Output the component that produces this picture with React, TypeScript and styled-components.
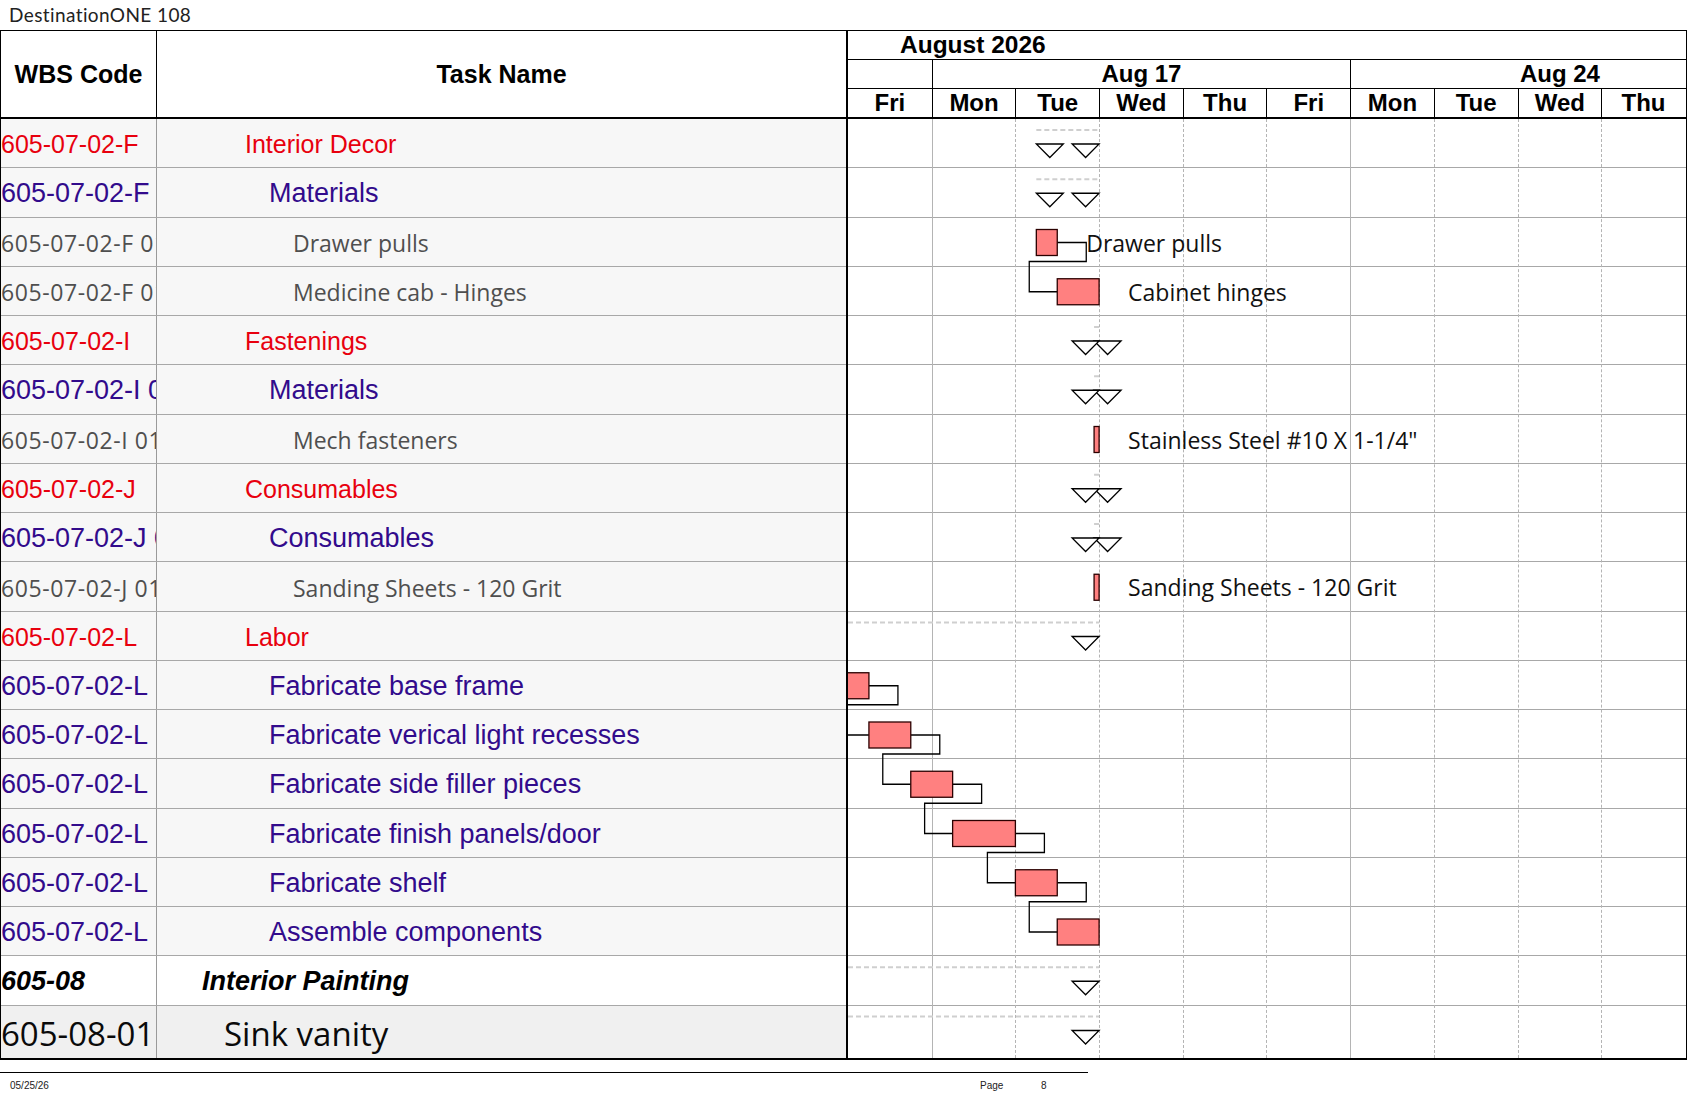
import React from "react";
import styled, { createGlobalStyle, css } from "styled-components";

const DAY = 83.7;
const ROW = 49.25;
const LAST_ROW = 52;
const CHART_W = 837;

type Level = "section" | "group" | "item" | "phase" | "task";

interface TaskRow {
  wbs: string;
  name: string;
  level: Level;
}

const rows: TaskRow[] = [
  { wbs: "605-07-02-F", name: "Interior Decor", level: "section" },
  { wbs: "605-07-02-F 01", name: "Materials", level: "group" },
  { wbs: "605-07-02-F 01 01", name: "Drawer pulls", level: "item" },
  { wbs: "605-07-02-F 01 02", name: "Medicine cab - Hinges", level: "item" },
  { wbs: "605-07-02-I", name: "Fastenings", level: "section" },
  { wbs: "605-07-02-I 01", name: "Materials", level: "group" },
  { wbs: "605-07-02-I 01 01", name: "Mech fasteners", level: "item" },
  { wbs: "605-07-02-J", name: "Consumables", level: "section" },
  { wbs: "605-07-02-J 01", name: "Consumables", level: "group" },
  { wbs: "605-07-02-J 01 01", name: "Sanding Sheets - 120 Grit", level: "item" },
  { wbs: "605-07-02-L", name: "Labor", level: "section" },
  { wbs: "605-07-02-L", name: "Fabricate base frame", level: "group" },
  { wbs: "605-07-02-L", name: "Fabricate verical light recesses", level: "group" },
  { wbs: "605-07-02-L", name: "Fabricate side filler pieces", level: "group" },
  { wbs: "605-07-02-L", name: "Fabricate finish panels/door", level: "group" },
  { wbs: "605-07-02-L", name: "Fabricate shelf", level: "group" },
  { wbs: "605-07-02-L", name: "Assemble components", level: "group" },
  { wbs: "605-08", name: "Interior Painting", level: "phase" },
  { wbs: "605-08-01", name: "Sink vanity", level: "task" },
];

// start / end in days from the first visible column (Fri)
const summaries = [
  { row: 0, start: 2.25, end: 3 },
  { row: 1, start: 2.25, end: 3 },
  { row: 4, start: 2.94, end: 3 },
  { row: 5, start: 2.94, end: 3 },
  { row: 7, start: 2.94, end: 3 },
  { row: 8, start: 2.94, end: 3 },
  { row: 10, start: -3, end: 3 },
  { row: 17, start: -3, end: 3 },
  { row: 18, start: -3, end: 3 },
];

const bars = [
  { row: 2, start: 2.25, end: 2.5, label: "Drawer pulls" },
  { row: 3, start: 2.5, end: 3, label: "Cabinet hinges" },
  { row: 6, start: 2.94, end: 3, label: 'Stainless Steel #10 X 1-1/4"' },
  { row: 9, start: 2.94, end: 3, label: "Sanding Sheets - 120 Grit" },
  { row: 11, start: -0.25, end: 0.25 },
  { row: 12, start: 0.25, end: 0.75 },
  { row: 13, start: 0.75, end: 1.25 },
  { row: 14, start: 1.25, end: 2 },
  { row: 15, start: 2, end: 2.5 },
  { row: 16, start: 2.5, end: 3 },
];

const links: [number, number][] = [
  [2, 3],
  [11, 12],
  [12, 13],
  [13, 14],
  [14, 15],
  [15, 16],
];

const days = ["Fri", "Mon", "Tue", "Wed", "Thu", "Fri", "Mon", "Tue", "Wed", "Thu"];

const weeks = [
  { label: "", days: 1 },
  { label: "Aug 17", days: 5 },
  { label: "Aug 24", days: 5 },
];

const GlobalStyle = createGlobalStyle`
  html, body {
    margin: 0;
    padding: 0;
    background: #fff;
  }
  body {
    font-family: "Liberation Sans", Arial, sans-serif;
  }
`;

const Page = styled.div`
  width: 1687px;
  height: 1097px;
  overflow: hidden;
  background: #fff;
`;

const Title = styled.div`
  height: 30px;
  padding-left: 9px;
  font-family: "Lato", "DejaVu Sans", sans-serif;
  font-size: 19px;
  letter-spacing: 0.4px;
  line-height: 30px;
  color: #222;
`;

const Sheet = styled.div`
  display: flex;
  border-top: 1px solid #000;
  border-bottom: 2px solid #000;
`;

const LeftTable = styled.div`
  width: 846px;
  flex-shrink: 0;
  box-sizing: border-box;
  border-left: 1px solid #000;
  display: flex;
  flex-direction: column;
`;

const LeftHeader = styled.div`
  height: 88px;
  box-sizing: border-box;
  border-bottom: 2px solid #000;
  display: grid;
  grid-template-columns: 156px 1fr;
`;

const HeadCell = styled.div<{ $divider?: boolean }>`
  display: flex;
  align-items: center;
  justify-content: center;
  font-weight: bold;
  font-size: 25px;
  color: #000;
  ${(p) => p.$divider && "border-right: 1px solid #000;"}
`;

const levelFont: Record<Level, ReturnType<typeof css>> = {
  section: css`
    color: #e8000e;
    font-size: 25px;
  `,
  group: css`
    color: #320b8c;
    font-size: 27px;
  `,
  item: css`
    color: #4f4f4f;
    font-family: "Open Sans", "Noto Sans", sans-serif;
    font-size: 23px;
  `,
  phase: css`
    color: #000;
    font-size: 27px;
    font-weight: bold;
    font-style: italic;
  `,
  task: css`
    color: #0a0a0a;
    font-family: "Open Sans", "Noto Sans", sans-serif;
    font-size: 33px;
  `,
};

const indent: Record<Level, number> = {
  section: 88,
  group: 112,
  item: 136,
  phase: 45,
  task: 67,
};

const rowShade: Record<Level, string> = {
  section: "#f7f7f7",
  group: "#f7f7f7",
  item: "#f7f7f7",
  phase: "#ffffff",
  task: "#f0f0f0",
};

const LeftRow = styled.div<{ $level: Level; $height: number; $last?: boolean }>`
  height: ${(p) => p.$height}px;
  box-sizing: border-box;
  padding-top: 3px;
  display: grid;
  grid-template-columns: 156px 1fr;
  background: ${(p) => rowShade[p.$level]};
  border-bottom: ${(p) => (p.$last ? "none" : "1px solid #a8a8a8")};
  white-space: nowrap;
  ${(p) => levelFont[p.$level]}
`;

const WbsCell = styled.div<{ $spaced?: boolean }>`
  display: flex;
  align-items: center;
  overflow: hidden;
  border-right: 1px solid #9a9a9a;
  margin-top: -3px;
  padding-top: 3px;
  letter-spacing: ${(p) => (p.$spaced ? "0.6px" : "normal")};
`;

const NameCell = styled.div<{ $indent: number }>`
  display: flex;
  align-items: center;
  overflow: hidden;
  padding-left: ${(p) => p.$indent}px;
`;

const Gantt = styled.div`
  flex: 1;
  box-sizing: border-box;
  border-left: 2px solid #000;
  border-right: 1px solid #000;
  overflow: hidden;
`;

const GanttHeader = styled.div`
  height: 88px;
  box-sizing: border-box;
  border-bottom: 2px solid #000;
  display: flex;
  flex-direction: column;
  font-weight: bold;
  font-size: 24px;
  color: #000;
`;

const MonthRow = styled.div`
  height: 30px;
  box-sizing: border-box;
  border-bottom: 1px solid #000;
  padding-left: 52px;
  font-size: 24.5px;
  display: flex;
  align-items: center;
`;

const WeekRow = styled.div`
  height: 29px;
  box-sizing: border-box;
  border-bottom: 1px solid #000;
  display: flex;
  overflow: hidden;
`;

const WeekCell = styled.div<{ $width: number; $first?: boolean }>`
  width: ${(p) => p.$width}px;
  flex-shrink: 0;
  box-sizing: border-box;
  border-left: ${(p) => (p.$first ? "none" : "1px solid #000")};
  display: flex;
  align-items: center;
  justify-content: center;
`;

const DayRow = styled.div`
  flex: 1;
  display: flex;
`;

const DayCell = styled.div<{ $first?: boolean }>`
  width: ${DAY}px;
  flex-shrink: 0;
  box-sizing: border-box;
  border-left: ${(p) => (p.$first ? "none" : "1px solid #000")};
  display: flex;
  align-items: center;
  justify-content: center;
`;

const GanttBody = styled.div`
  position: relative;
  display: flex;
  flex-direction: column;
`;

const GanttRow = styled.div<{ $height: number; $last?: boolean }>`
  height: ${(p) => p.$height}px;
  box-sizing: border-box;
  border-bottom: ${(p) => (p.$last ? "none" : "1px solid #a8a8a8")};
`;

const Guides = styled.div`
  position: absolute;
  inset: 0;
  display: flex;
  pointer-events: none;
`;

const Guide = styled.div<{ $line: "none" | "solid" | "dashed" }>`
  width: ${DAY}px;
  flex-shrink: 0;
  box-sizing: border-box;
  border-left: ${(p) => (p.$line === "none" ? "none" : `1px ${p.$line} #b4b4b4`)};
`;

const Chart = styled.svg`
  position: absolute;
  top: 0;
  left: 0;
  overflow: hidden;
`;

const ChartLabel = styled.text`
  font-family: "Open Sans", "Noto Sans", sans-serif;
  font-size: 23px;
  fill: #111;
  dominant-baseline: central;
`;

const Footer = styled.div`
  margin-top: 12px;
  width: 1088px;
  border-top: 1px solid #000;
  display: flex;
  padding-top: 7px;
  font-size: 10px;
  line-height: 12px;
  color: #222;
`;

const FooterDate = styled.span`
  width: 970px;
  padding-left: 10px;
`;

const FooterPage = styled.span`
  width: 61px;
`;

const x = (t: number) => t * DAY;
const rowTop = (i: number) => i * ROW;

const Triangle = ({ left, top }: { left: number; top: number }) => (
  <polygon
    points={`${left},${top} ${left + 27},${top} ${left + 13.5},${top + 13.5}`}
    fill="#fff"
    stroke="#000"
    strokeWidth={1.3}
    strokeLinejoin="miter"
  />
);

const GanttChart = ({ height }: { height: number }) => {
  const barOf = (row: number) => bars.find((b) => b.row === row)!;
  return (
    <Chart width={CHART_W} height={height} viewBox={`0 0 ${CHART_W} ${height}`}>
      {summaries.map((s) => {
        const top = rowTop(s.row);
        return (
          <g key={`s${s.row}`}>
            <line
              x1={Math.max(0, x(s.start))}
              x2={x(s.end)}
              y1={top + 11}
              y2={top + 11}
              stroke="#cfcfcf"
              strokeWidth={2}
              strokeDasharray="5 3"
            />
            {s.start >= 0 && <Triangle left={x(s.start)} top={top + 25} />}
            <Triangle left={x(s.end) - 27} top={top + 25} />
          </g>
        );
      })}
      {links.map(([a, b]) => {
        const from = barOf(a);
        const to = barOf(b);
        const e = x(from.end);
        const s = x(to.start);
        const d = `M${e},${rowTop(a) + 25} H${e + 29} V${rowTop(a) + 44} H${s - 28} V${
          rowTop(b) + 25
        } H${s}`;
        return <path key={`l${a}`} d={d} fill="none" stroke="#000" strokeWidth={1.3} />;
      })}
      {bars.map((b) => {
        const top = rowTop(b.row);
        return (
          <g key={`b${b.row}`}>
            <rect
              x={x(b.start)}
              y={top + 12}
              width={x(b.end) - x(b.start)}
              height={26}
              fill="#ff8080"
              stroke="#2b0000"
              strokeWidth={1.3}
            />
            {b.label && (
              <ChartLabel x={x(b.end) + 29} y={top + 25}>
                {b.label}
              </ChartLabel>
            )}
          </g>
        );
      })}
    </Chart>
  );
};

const rowHeight = (i: number) => (i === rows.length - 1 ? LAST_ROW : ROW);
const bodyHeight = rows.reduce((sum, _r, i) => sum + rowHeight(i), 0);

const App = () => {
  return (
    <Page>
      <GlobalStyle />
      <Title>DestinationONE 108</Title>
      <Sheet>
        <LeftTable>
          <LeftHeader>
            <HeadCell $divider>WBS Code</HeadCell>
            <HeadCell>Task Name</HeadCell>
          </LeftHeader>
          {rows.map((r, i) => (
            <LeftRow
              key={i}
              $level={r.level}
              $height={rowHeight(i)}
              $last={i === rows.length - 1}
            >
              <WbsCell $spaced={r.level === "item"}>{r.wbs}</WbsCell>
              <NameCell $indent={indent[r.level]}>{r.name}</NameCell>
            </LeftRow>
          ))}
        </LeftTable>
        <Gantt>
          <GanttHeader>
            <MonthRow>August 2026</MonthRow>
            <WeekRow>
              {weeks.map((w, i) => (
                <WeekCell key={i} $width={w.days * DAY} $first={i === 0}>
                  {w.label}
                </WeekCell>
              ))}
            </WeekRow>
            <DayRow>
              {days.map((d, i) => (
                <DayCell key={i} $first={i === 0}>
                  {d}
                </DayCell>
              ))}
            </DayRow>
          </GanttHeader>
          <GanttBody>
            {rows.map((_r, i) => (
              <GanttRow key={i} $height={rowHeight(i)} $last={i === rows.length - 1} />
            ))}
            <Guides>
              {days.map((d, i) => (
                <Guide key={i} $line={i === 0 ? "none" : d === "Mon" ? "solid" : "dashed"} />
              ))}
            </Guides>
            <GanttChart height={bodyHeight} />
          </GanttBody>
        </Gantt>
      </Sheet>
      <Footer>
        <FooterDate>05/25/26</FooterDate>
        <FooterPage>Page</FooterPage>
        <span>8</span>
      </Footer>
    </Page>
  );
};

export default App;
